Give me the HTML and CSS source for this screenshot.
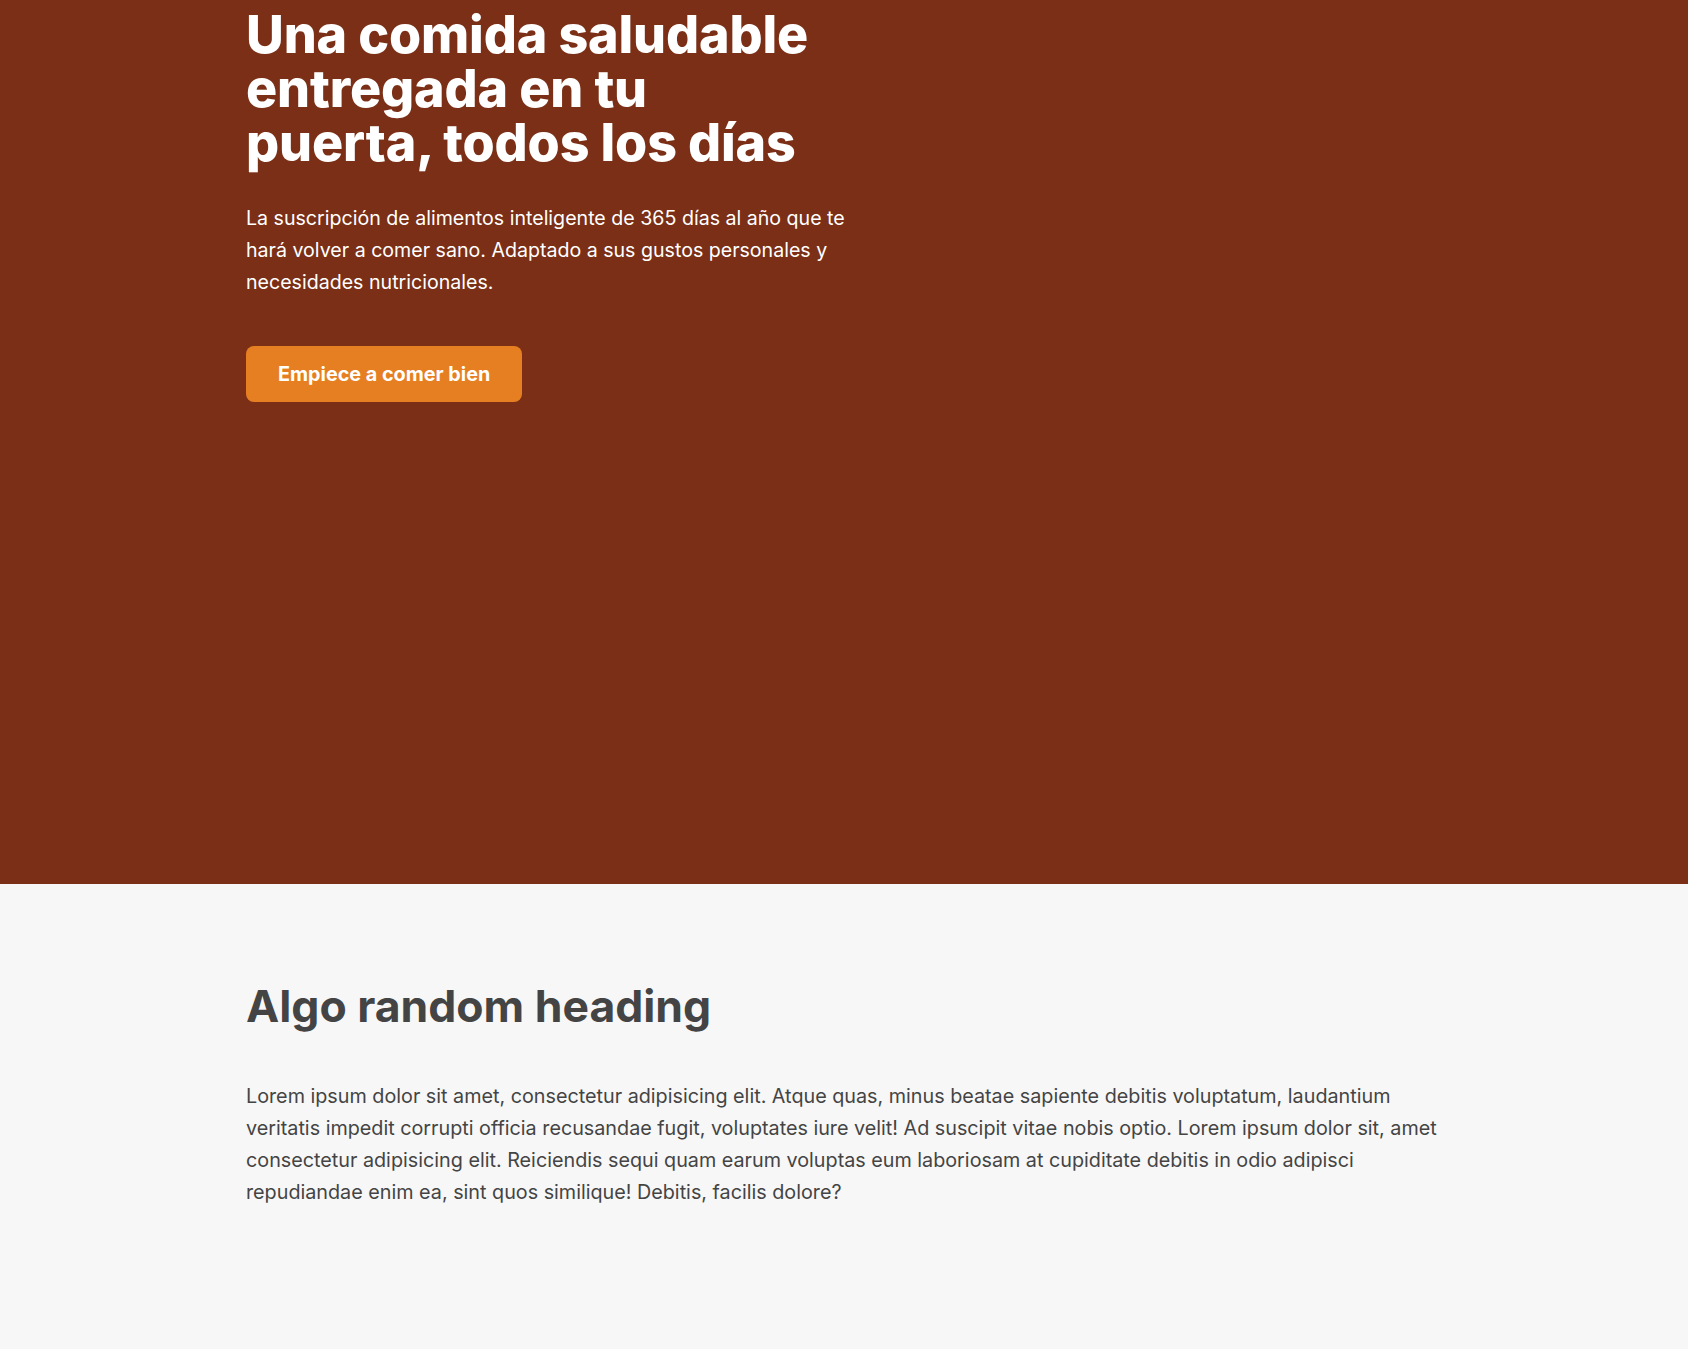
FILE: index.html
```html
<!DOCTYPE html>
<html lang="es">
<head>
<meta charset="utf-8">
<title>Comida saludable</title>
<link rel="stylesheet" href="styles.css">
</head>
<body>
<section class="hero">
  <div class="container hero-grid">
    <div class="hero-text">
      <h1 class="hero-title">Una comida saludable entregada en tu puerta, todos los días</h1>
      <p class="hero-desc">La suscripción de alimentos inteligente de 365 días al año que te hará volver a comer sano. Adaptado a sus gustos personales y necesidades nutricionales.</p>
      <a class="btn" href="#">Empiece a comer bien</a>
    </div>
    <div class="hero-img"></div>
  </div>
</section>
<section class="section">
  <div class="container">
    <h2 class="section-title">Algo random heading</h2>
    <p class="section-text">Lorem ipsum dolor sit amet, consectetur adipisicing elit. Atque quas, minus beatae sapiente debitis voluptatum, laudantium veritatis impedit corrupti officia recusandae fugit, voluptates iure velit! Ad suscipit vitae nobis optio. Lorem ipsum dolor sit, amet consectetur adipisicing elit. Reiciendis sequi quam earum voluptas eum laboriosam at cupiditate debitis in odio adipisci repudiandae enim ea, sint quos similique! Debitis, facilis dolore?</p>
  </div>
</section>
</body>
</html>
```

FILE: styles.css
```css
* {
  box-sizing: border-box;
}

body {
  margin: 0;
  font-family: "Inter", "Noto Sans", sans-serif;
  background: #f7f7f7;
  color: #444;
}

.container {
  width: 1196px;
  margin: 0 auto;
}

.hero {
  background: #7a2f16;
  height: 884px;
  padding-top: 8px;
}

.hero-grid {
  display: grid;
  grid-template-columns: 600px 596px;
}

.hero-title {
  margin: 0;
  max-width: 590px;
  color: #fff;
  font-size: 52px;
  line-height: 54px;
  font-weight: 800;
  letter-spacing: -0.15px;
}

.hero-desc {
  margin: 32px 0 48px;
  color: #fff;
  font-size: 19.6px;
  line-height: 32px;
}

.btn {
  display: inline-block;
  background: #e67e22;
  color: #fff;
  text-decoration: none;
  font-size: 19.8px;
  font-weight: 700;
  line-height: 24px;
  padding: 16px 32px;
  border-radius: 8px;
}

.section {
  padding: 96px 0 120px;
}

.section-title {
  margin: 0 0 48px;
  font-size: 44.5px;
  line-height: 52px;
  font-weight: 700;
  color: #444;
}

.section-text {
  margin: 0;
  font-size: 19.75px;
  line-height: 32px;
  color: #444;
}
```
